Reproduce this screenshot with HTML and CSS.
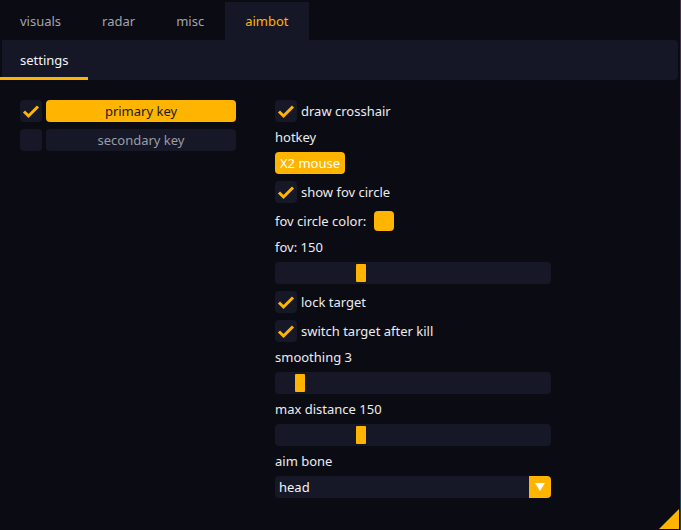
FILE: index.html
```html
<!DOCTYPE html>
<html>
<head>
<meta charset="utf-8">
<link rel="stylesheet" href="styles.css">
</head>
<body>
<div class="window">
  <div class="tabs">
    <div class="tab">visuals</div>
    <div class="tab">radar</div>
    <div class="tab">misc</div>
    <div class="tab active">aimbot</div>
  </div>
  <div class="subbar">
    <div class="subtab">settings</div>
  </div>
  <div class="content">
    <div class="col left">
      <div class="row">
        <div class="check on"><svg viewBox="0 0 22 22" width="22" height="22"><polyline points="4,11.5 8.5,16 18,6.5" fill="none" stroke="#ffb400" stroke-width="3"/></svg></div>
        <div class="btn wide primary">primary key</div>
      </div>
      <div class="row">
        <div class="check"></div>
        <div class="btn wide secondary">secondary key</div>
      </div>
    </div>
    <div class="col right">
      <div class="row">
        <div class="check on"><svg viewBox="0 0 22 22" width="22" height="22"><polyline points="4,11.5 8.5,16 18,6.5" fill="none" stroke="#ffb400" stroke-width="3"/></svg></div>
        <span class="label">draw crosshair</span>
      </div>
      <div class="text">hotkey</div>
      <div class="row"><div class="btn hot">X2 mouse</div></div>
      <div class="row">
        <div class="check on"><svg viewBox="0 0 22 22" width="22" height="22"><polyline points="4,11.5 8.5,16 18,6.5" fill="none" stroke="#ffb400" stroke-width="3"/></svg></div>
        <span class="label">show fov circle</span>
      </div>
      <div class="row wide-gap">
        <span class="label">fov circle color:</span>
        <div class="swatch"></div>
      </div>
      <div class="text">fov: 150</div>
      <div class="slider"><div class="grab" style="margin-left:79px"></div></div>
      <div class="row">
        <div class="check on"><svg viewBox="0 0 22 22" width="22" height="22"><polyline points="4,11.5 8.5,16 18,6.5" fill="none" stroke="#ffb400" stroke-width="3"/></svg></div>
        <span class="label">lock target</span>
      </div>
      <div class="row">
        <div class="check on"><svg viewBox="0 0 22 22" width="22" height="22"><polyline points="4,11.5 8.5,16 18,6.5" fill="none" stroke="#ffb400" stroke-width="3"/></svg></div>
        <span class="label">switch target after kill</span>
      </div>
      <div class="text">smoothing 3</div>
      <div class="slider"><div class="grab" style="margin-left:18px"></div></div>
      <div class="text">max distance 150</div>
      <div class="slider"><div class="grab" style="margin-left:79px"></div></div>
      <div class="text">aim bone</div>
      <div class="combo">
        <span class="combo-value">head</span>
        <div class="combo-arrow"><svg viewBox="0 0 22 22" width="22" height="22"><polygon points="6,7 16,7 11,15" fill="#ffffff"/></svg></div>
      </div>
    </div>
  </div>
  <div class="grip"></div>
</div>
</body>
</html>
```

FILE: styles.css
```css
html, body {
  margin: 0;
  padding: 0;
  background: #0b0b14;
}
body {
  font-family: "Noto Sans", "Open Sans", sans-serif;
  font-size: 13px;
  color: #ececf0;
}
.window {
  position: relative;
  width: 680px;
  height: 530px;
  background: #0b0b14;
  border-right: 1px solid #3a3450;
  border-image: linear-gradient(#4a3048, #2a4252) 1;
  border-top: 0;
  border-left: 0;
  border-bottom: 0;
  overflow: hidden;
}
.tabs {
  display: flex;
  gap: 1px;
  height: 40px;
  align-items: flex-end;
}
.tab {
  height: 38px;
  padding: 0 20px;
  display: flex;
  align-items: center;
  color: #a4a4ac;
}
.tab.active {
  background: #151726;
  color: #ffb400;
}
.subbar {
  height: 40px;
  margin: 0 2px;
  background: #151726;
  border-radius: 0 4px 4px 0;
  display: flex;
}
.subtab {
  box-sizing: border-box;
  margin-left: -2px;
  width: 88px;
  height: 40px;
  padding: 3px 0 0 20px;
  border-bottom: 3px solid #ffb400;
  display: flex;
  align-items: center;
  color: #f4f4f6;
}
.content {
  display: flex;
  padding: 20px 0 0 20px;
  gap: 39px;
}
.col {
  display: flex;
  flex-direction: column;
  gap: 7px;
}
.left { width: 216px; }
.right { width: 276px; }
.row {
  display: flex;
  align-items: center;
  gap: 4px;
  height: 22px;
}
.row.wide-gap { gap: 8px; }
.check {
  width: 22px;
  height: 22px;
  flex: 0 0 22px;
  background: #161828;
  border-radius: 4px;
}
.check svg { display: block; }
.btn {
  height: 22px;
  line-height: 22px;
  border-radius: 4px;
  text-align: center;
}
.btn.wide { flex: 1; }
.primary {
  background: #ffb400;
  color: #1a1a20;
}
.secondary {
  background: #161828;
  color: #9c9ca6;
}
.hot {
  background: #ffb400;
  color: #ffffff;
  padding: 0 5px;
}
.label {
  line-height: 22px;
  white-space: nowrap;
}
.text {
  height: 16px;
  line-height: 16px;
}
.swatch {
  width: 20px;
  height: 20px;
  background: #ffb400;
  border-radius: 4px;
}
.slider {
  box-sizing: border-box;
  height: 22px;
  padding: 2px;
  background: #161828;
  border-radius: 4px;
  display: flex;
}
.grab {
  width: 10px;
  height: 18px;
  background: #ffb400;
  border-radius: 1px;
}
.combo {
  display: flex;
  height: 22px;
  background: #161828;
  border-radius: 4px;
}
.combo-value {
  flex: 1;
  padding-left: 4px;
  line-height: 22px;
  color: #f4f4f6;
}
.combo-arrow {
  width: 22px;
  height: 22px;
  background: #ffb400;
  border-radius: 0 4px 4px 0;
}
.combo-arrow svg { display: block; }
.grip {
  position: absolute;
  right: 1px;
  bottom: 1px;
  width: 20px;
  height: 20px;
  background: #ffb400;
  clip-path: polygon(100% 0, 100% 100%, 0 100%);
}
```
